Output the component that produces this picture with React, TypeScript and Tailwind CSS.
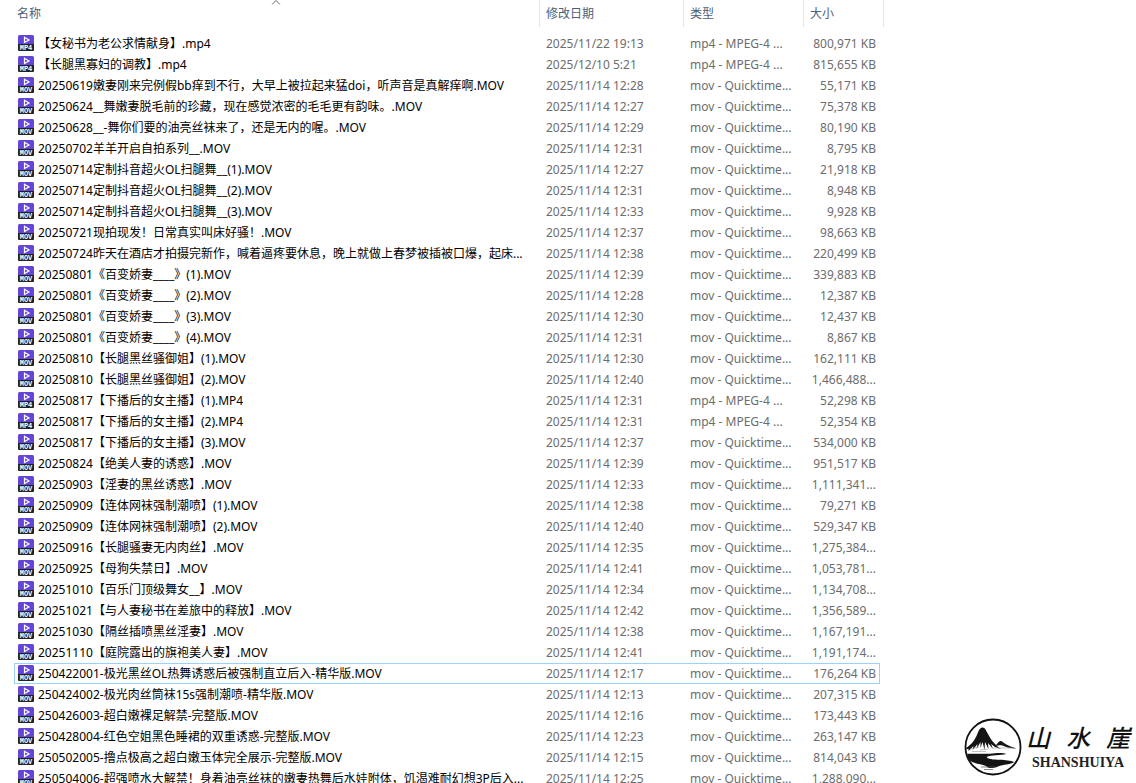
import clsx from 'clsx';
import { useState } from 'react';

type FileRow = [name: string, date: string, size: string];

const files: FileRow[] = [
  ['【女秘书为老公求情献身】.mp4', '2025/11/22 19:13', '800,971 KB'],
  ['【长腿黑寡妇的调教】.mp4', '2025/12/10 5:21', '815,655 KB'],
  ['20250619嫩妻刚来完例假bb痒到不行，大早上被拉起来猛doi，听声音是真解痒啊.MOV', '2025/11/14 12:28', '55,171 KB'],
  ['20250624__舞嫩妻脱毛前的珍藏，现在感觉浓密的毛毛更有韵味。.MOV', '2025/11/14 12:27', '75,378 KB'],
  ['20250628__-舞你们要的油亮丝袜来了，还是无内的喔。.MOV', '2025/11/14 12:29', '80,190 KB'],
  ['20250702羊羊开启自拍系列__.MOV', '2025/11/14 12:31', '8,795 KB'],
  ['20250714定制抖音超火OL扫腿舞__(1).MOV', '2025/11/14 12:27', '21,918 KB'],
  ['20250714定制抖音超火OL扫腿舞__(2).MOV', '2025/11/14 12:31', '8,948 KB'],
  ['20250714定制抖音超火OL扫腿舞__(3).MOV', '2025/11/14 12:33', '9,928 KB'],
  ['20250721现拍现发！日常真实叫床好骚！.MOV', '2025/11/14 12:37', '98,663 KB'],
  ['20250724昨天在酒店才拍摄完新作，喊着逼疼要休息，晚上就做上春梦被插被口爆，起床...', '2025/11/14 12:38', '220,499 KB'],
  ['20250801《百变娇妻____》(1).MOV', '2025/11/14 12:39', '339,883 KB'],
  ['20250801《百变娇妻____》(2).MOV', '2025/11/14 12:28', '12,387 KB'],
  ['20250801《百变娇妻____》(3).MOV', '2025/11/14 12:30', '12,437 KB'],
  ['20250801《百变娇妻____》(4).MOV', '2025/11/14 12:31', '8,867 KB'],
  ['20250810【长腿黑丝骚御姐】(1).MOV', '2025/11/14 12:30', '162,111 KB'],
  ['20250810【长腿黑丝骚御姐】(2).MOV', '2025/11/14 12:40', '1,466,488...'],
  ['20250817【下播后的女主播】(1).MP4', '2025/11/14 12:31', '52,298 KB'],
  ['20250817【下播后的女主播】(2).MP4', '2025/11/14 12:31', '52,354 KB'],
  ['20250817【下播后的女主播】(3).MOV', '2025/11/14 12:37', '534,000 KB'],
  ['20250824【绝美人妻的诱惑】.MOV', '2025/11/14 12:39', '951,517 KB'],
  ['20250903【淫妻的黑丝诱惑】.MOV', '2025/11/14 12:33', '1,111,341...'],
  ['20250909【连体网袜强制潮喷】(1).MOV', '2025/11/14 12:38', '79,271 KB'],
  ['20250909【连体网袜强制潮喷】(2).MOV', '2025/11/14 12:40', '529,347 KB'],
  ['20250916【长腿骚妻无内肉丝】.MOV', '2025/11/14 12:35', '1,275,384...'],
  ['20250925【母狗失禁日】.MOV', '2025/11/14 12:41', '1,053,781...'],
  ['20251010【百乐门顶级舞女__】.MOV', '2025/11/14 12:34', '1,134,708...'],
  ['20251021【与人妻秘书在差旅中的释放】.MOV', '2025/11/14 12:42', '1,356,589...'],
  ['20251030【隔丝插喷黑丝淫妻】.MOV', '2025/11/14 12:38', '1,167,191...'],
  ['20251110【庭院露出的旗袍美人妻】.MOV', '2025/11/14 12:41', '1,191,174...'],
  ['250422001-极光黑丝OL热舞诱惑后被强制直立后入-精华版.MOV', '2025/11/14 12:17', '176,264 KB'],
  ['250424002-极光肉丝筒袜15s强制潮喷-精华版.MOV', '2025/11/14 12:13', '207,315 KB'],
  ['250426003-超白嫩裸足解禁-完整版.MOV', '2025/11/14 12:16', '173,443 KB'],
  ['250428004-红色空姐黑色睡裙的双重诱惑-完整版.MOV', '2025/11/14 12:23', '263,147 KB'],
  ['250502005-撸点极高之超白嫩玉体完全展示-完整版.MOV', '2025/11/14 12:15', '814,043 KB'],
  ['250504006-超强喷水大解禁！身着油亮丝袜的嫩妻热舞后水娃附体，饥渴难耐幻想3P后入...', '2025/11/14 12:25', '1,288,090...'],
];

const isMp4 = (name: string) => name.toLowerCase().endsWith('.mp4');

function FileIcon({ mp4 }: { mp4: boolean }) {
  return (
    <svg width="16" height="16" viewBox="0 0 16 16" className="mt-px shrink-0" aria-hidden="true">
      <path d="M1.500 0h13A1.500 1.500 0 0 1 16 1.500V9H0V1.500A1.500 1.500 0 0 1 1.500 0z" fill="#6545d6" />
      <path d="M0 9h16v6a1 1 0 0 1-1 1H1a1 1 0 0 1-1-1z" fill="#222126" />
      <path d="M6.500 2.300v5.200l4.500-2.600z" fill="none" stroke="#fff" strokeWidth="1.200" />
      <text x="8" y="15" textAnchor="middle" fontSize="7" fontWeight="700" fill="#fff" fontFamily="Liberation Mono, monospace">
        {mp4 ? 'MP4' : 'MOV'}
      </text>
    </svg>
  );
}

function Logo() {
  return (
    <div className="flex items-center gap-1">
      <svg width="58" height="58" viewBox="0 0 58 58" className="shrink-0" aria-hidden="true">
        <defs>
          <clipPath id="ring">
            <circle cx="29" cy="29" r="27" />
          </clipPath>
        </defs>
        <g clipPath="url(#ring)" fill="#141414">
          {/* peaks */}
          <path d="M1 31c4-3 8-6 11-12 2-4 3-9 6-9.500 3-.5 4 3 6 6.500 2 4 4 7 7 10 2 2 4 4 6 5l-6-2-4-3 2 5-5-6 .5 6-3.500-7-.5 8-2-8-2 6 0-6-4 7 1-5-5 6 1-4-5 5 0-2z" />
          <path d="M31 28c2-1 3-4.500 5.500-5 2 0 3 2 5 3 3 2 7 3 11 4.500-6 0-10-1-14-3-3-.5-5 .5-7.500.5z" />
          {/* water */}
          <path d="M1 36c9-1 20 .5 30-.8 5-.4 10 0 11 .8-4 1.500-16 1-19 2.800-1 2 6 2.700 13 3 5 .3 11 .8 14 2.200-2 2-9 2.500-13 3.500-5 1.500-5 2.500-10 2.500-4 0-3-1.500-8-3C10 45 2 43 1 36z" />
          <path d="M17 49h15M20 51.500h9" fill="none" stroke="#555" strokeWidth=".7" />
          <path d="M6 31l9-2M16 32l8-1M29 30h22M8 33.500h14" fill="none" stroke="#999" strokeWidth=".6" />
        </g>
        <circle cx="29" cy="29" r="27.500" fill="none" stroke="#111" strokeWidth="1.800" />
      </svg>
      <div className="flex w-[104px] flex-col items-center">
        <div className="flex w-full justify-between font-['Noto_Sans_CJK_SC',sans-serif] text-2xl leading-8 font-medium text-[#111] italic">
          <span>山</span>
          <span>水</span>
          <span>崖</span>
        </div>
        <div className="font-['Liberation_Serif',serif] text-sm leading-5 font-bold text-[#222]">SHANSHUIYA</div>
      </div>
    </div>
  );
}

const headCell = 'h-[27px] border-r border-[#e5e5e5] p-0 text-left font-normal';
const headButton = 'block w-full pt-px text-left leading-[26px]';
const cell = 'h-[21px] border-y p-0 whitespace-nowrap';

export default function App() {
  const [selected, setSelected] = useState(30);

  return (
    <div className="flex h-screen overflow-hidden bg-white font-['Noto_Sans','Noto_Sans_CJK_SC',sans-serif] text-xs">
      <main className="min-w-0 flex-1 pl-3.5">
        <table className="w-full table-fixed border-separate border-spacing-0">
          <colgroup>
            <col />
            <col className="w-36" />
            <col className="w-[120px]" />
            <col className="w-[76px]" />
            <col className="w-1" />
          </colgroup>
          <thead className="text-[#4c607a]">
            <tr>
              <th className={clsx(headCell, 'relative')}>
                <button className={clsx(headButton, 'pl-[3px]')}>名称</button>
                <svg width="9" height="5" viewBox="0 0 9 5" className="absolute top-0 left-1/2 -translate-x-1/2" aria-hidden="true">
                  <path d="M0.500 4.500l4-4 4 4" fill="none" stroke="#666" />
                </svg>
              </th>
              <th className={headCell}>
                <button className={clsx(headButton, 'pl-1.5')}>修改日期</button>
              </th>
              <th className={headCell}>
                <button className={clsx(headButton, 'pl-1.5')}>类型</button>
              </th>
              <th className={headCell} colSpan={2}>
                <button className={clsx(headButton, 'pl-1.5')}>大小</button>
              </th>
            </tr>
          </thead>
          <tbody className="text-[#6d6d6d]">
            <tr aria-hidden="true">
              <td className="h-1.5 p-0" colSpan={5} />
            </tr>
            {files.map(([name, date, size], i) => {
              const border = i === selected ? 'border-[#99d1ff]' : 'border-transparent';
              return (
                <tr key={name} onClick={() => setSelected(i)}>
                  <td className={clsx(cell, border, 'border-l')}>
                    <div className="flex items-start gap-1 pl-[3px] leading-[19px] text-black">
                      <FileIcon mp4={isMp4(name)} />
                      <span>{name}</span>
                    </div>
                  </td>
                  <td className={clsx(cell, border, 'pl-1.5 leading-[19px]')}>{date}</td>
                  <td className={clsx(cell, border, 'pl-1.5 leading-[19px]')}>
                    {isMp4(name) ? 'mp4 - MPEG-4 ...' : 'mov - Quicktime...'}
                  </td>
                  <td className={clsx(cell, border, 'border-r pr-[3px] text-right leading-[19px]')}>{size}</td>
                </tr>
              );
            })}
          </tbody>
        </table>
      </main>
      <aside className="flex w-[252px] shrink-0 items-end justify-end pr-1.5 pb-[7px]">
        <Logo />
      </aside>
    </div>
  );
}
